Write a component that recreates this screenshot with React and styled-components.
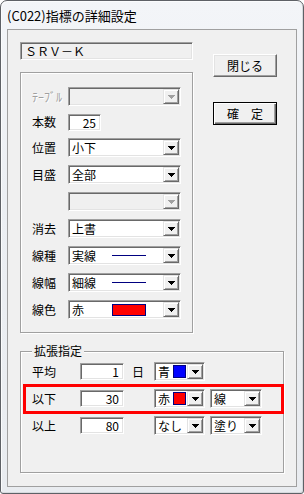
import styled, { createGlobalStyle, css } from "styled-components";

const GlobalStyle = createGlobalStyle`
  html, body {
    margin: 0;
    padding: 0;
    background: #ffffff;
  }
  body {
    font-family: "Noto Sans CJK JP", "Liberation Sans", sans-serif;
    font-size: 12px;
    line-height: 14px;
    color: #000;
  }
  * {
    box-sizing: border-box;
  }
`;

// 3D edges of the classic Windows controls
const sunken = css`
  border: 1px solid;
  border-color: #a0a0a0 #ffffff #ffffff #a0a0a0;
  box-shadow: inset 1px 1px 0 #696969, inset -1px -1px 0 #e3e3e3;
`;

const raised = css`
  border: 1px solid;
  border-color: #e3e3e3 #696969 #696969 #e3e3e3;
  box-shadow: inset 1px 1px 0 #ffffff, inset -1px -1px 0 #a0a0a0;
`;

const etched = css`
  border: 1px solid #a0a0a0;
  box-shadow: inset 1px 1px 0 #ffffff, 1px 1px 0 #ffffff;
`;

const mainRows = [
  { id: 1, label: "本数", kind: "edit", value: "25" },
  { id: 2, label: "位置", kind: "combo", value: "小下" },
  { id: 3, label: "目盛", kind: "combo", value: "全部" },
  { id: 4, label: "", kind: "combo", value: "", disabled: true },
  { id: 5, label: "消去", kind: "combo", value: "上書" },
  { id: 6, label: "線種", kind: "combo", value: "実線", sample: "line" },
  { id: 7, label: "線幅", kind: "combo", value: "細線", sample: "line" },
  { id: 8, label: "線色", kind: "combo", value: "赤", sample: "color" }
];

const extRows = [
  { id: 1, label: "平均", value: "1", unit: "日", color: "青", swatch: "#0000ff" },
  { id: 2, label: "以下", value: "30", color: "赤", swatch: "#ff0000", type: "線", highlight: true },
  { id: 3, label: "以上", value: "80", color: "なし", type: "塗り" }
];

const Arrow = ({ disabled }) => (
  <svg width="7" height="4" viewBox="0 0 7 4">
    <path
      d="M0 0h7v1H0zM1 1h5v1H1zM2 2h3v1H2zM3 3h1v1H3z"
      fill={disabled ? "#a0a0a0" : "#000000"}
    />
  </svg>
);

const Combo = ({ width, disabled, children }) => (
  <ComboBox $width={width} $disabled={disabled}>
    <ComboValue>{children}</ComboValue>
    <DropButton>
      <Arrow disabled={disabled} />
    </DropButton>
  </ComboBox>
);

const App = () => {
  return (
    <>
      <GlobalStyle />
      <Window>
        <TitleBar>(C022)指標の詳細設定</TitleBar>
        <Panel>
          <TopArea>
            <LeftCol>
              <NameField>ＳＲＶ－Ｋ</NameField>
              <MainGroup>
                <Row>
                  <Label $disabled>ﾃｰﾌﾞﾙ</Label>
                  <Combo width={113} disabled />
                </Row>
                {mainRows.map((row) => (
                  <Row key={row.id} $h={row.kind === "edit" ? 16 : 19}>
                    <Label>{row.label}</Label>
                    {row.kind === "edit" ? (
                      <EditBox $width={33}>{row.value}</EditBox>
                    ) : (
                      <Combo width={113} disabled={row.disabled}>
                        <ValueText>{row.value}</ValueText>
                        {row.sample === "line" && <LineSample />}
                        {row.sample === "color" && <Swatch $color="#ff0000" $w={34} />}
                      </Combo>
                    )}
                  </Row>
                ))}
              </MainGroup>
            </LeftCol>
            <RightCol>
              <PushButton>閉じる</PushButton>
              <PushButton $default>確　定</PushButton>
            </RightCol>
          </TopArea>

          <ExtGroup>
            <Caption>拡張指定</Caption>
            {extRows.map((row) => (
              <ExtRow key={row.id} $highlight={row.highlight}>
                <ExtLabel>{row.label}</ExtLabel>
                <EditBox $width={44}>{row.value}</EditBox>
                <Unit>{row.unit}</Unit>
                <Combo width={51}>
                  <SmallText>{row.color}</SmallText>
                  {row.swatch && <Swatch $color={row.swatch} $w={13} />}
                </Combo>
                {row.type && (
                  <TypeSlot>
                    <Combo width={52}>
                      <SmallText>{row.type}</SmallText>
                    </Combo>
                  </TypeSlot>
                )}
              </ExtRow>
            ))}
          </ExtGroup>
        </Panel>
      </Window>
    </>
  );
};

const Window = styled.div`
  width: 304px;
  height: 494px;
  display: flex;
  flex-direction: column;
  border: 1px solid #5e6166;
  border-radius: 7px 7px 3px 3px;
  background: linear-gradient(180deg, #f3f5f8 0%, #eceff3 40%, #e9ecf0 100%);
  box-shadow: inset 1px 1px 0 #fbfcfd, inset -1px -1px 0 #d6d9dd;
  overflow: hidden;
`;

const TitleBar = styled.div`
  height: 28px;
  flex-shrink: 0;
  display: flex;
  align-items: center;
  padding: 2px 0 0 6px;
  font-size: 13px;
  color: #000;
`;

const Panel = styled.div`
  flex: 1;
  margin: 0 6px 6px 6px;
  border: 1px solid #a0a0a0;
  background: #f0f0f0;
  padding: 12px 0 0 12px;
  display: flex;
  flex-direction: column;
`;

const TopArea = styled.div`
  display: flex;
`;

const LeftCol = styled.div`
  width: 173px;
  display: flex;
  flex-direction: column;
`;

const RightCol = styled.div`
  display: flex;
  flex-direction: column;
  gap: 25px;
  margin-left: 20px;
  padding-top: 12px;
`;

const NameField = styled.div`
  height: 18px;
  ${sunken};
  background: #f0f0f0;
  padding: 1px 0 0 4px;
  line-height: 14px;
`;

const MainGroup = styled.div`
  margin-top: 12px;
  height: 261px;
  ${etched};
  padding: 14px 0 0 11px;
  display: flex;
  flex-direction: column;
  gap: 8px;
`;

const Row = styled.div`
  display: flex;
  align-items: center;
  height: ${(p) => p.$h || 19}px;
`;

const Label = styled.span`
  width: 36px;
  flex-shrink: 0;
  color: ${(p) => (p.$disabled ? "#a0a0a0" : "#000")};
  text-shadow: ${(p) => (p.$disabled ? "1px 1px 0 #ffffff" : "none")};
`;

const ComboBox = styled.div`
  width: ${(p) => p.$width}px;
  height: 19px;
  flex-shrink: 0;
  display: flex;
  align-items: center;
  ${sunken};
  background: ${(p) => (p.$disabled ? "#f0f0f0" : "#ffffff")};
  padding: 1px 1px 1px 2px;
`;

const ComboValue = styled.div`
  flex: 1;
  display: flex;
  align-items: center;
  height: 15px;
  overflow: hidden;
`;

const DropButton = styled.div`
  width: 16px;
  height: 15px;
  flex-shrink: 0;
  display: flex;
  align-items: center;
  justify-content: center;
  background: #f0f0f0;
  ${raised};
`;

const ValueText = styled.span`
  width: 41px;
  flex-shrink: 0;
  padding-left: 1px;
`;

const SmallText = styled.span`
  padding-left: 1px;
  white-space: nowrap;
`;

const LineSample = styled.span`
  width: 34px;
  height: 1px;
  background: #000080;
`;

const Swatch = styled.span`
  width: ${(p) => p.$w}px;
  height: ${(p) => (p.$w > 20 ? 12 : 13)}px;
  margin-left: ${(p) => (p.$w > 20 ? 0 : 3)}px;
  background: ${(p) => p.$color};
  border: 1px solid #000080;
`;

const EditBox = styled.div`
  width: ${(p) => p.$width}px;
  height: 17px;
  flex-shrink: 0;
  ${sunken};
  background: #ffffff;
  text-align: right;
  padding: 1px 4px 0 0;
  line-height: 14px;
`;

const PushButton = styled.button`
  width: 64px;
  height: 23px;
  padding: 0;
  font-family: inherit;
  font-size: 12px;
  color: #000;
  background: #f0f0f0;
  border: 1px solid;
  border-color: #ffffff #696969 #696969 #ffffff;
  box-shadow: inset -1px -1px 0 #a0a0a0, inset 1px 1px 0 #e3e3e3;
  ${(p) =>
    p.$default &&
    css`
      border: 1px solid #000;
      box-shadow: inset 1px 1px 0 #ffffff, inset -1px -1px 0 #696969,
        inset -2px -2px 0 #a0a0a0;
    `}
`;

const ExtGroup = styled.div`
  position: relative;
  width: 264px;
  height: 122px;
  margin-top: 18px;
  ${etched};
  padding: 10px 0 0 2px;
  display: flex;
  flex-direction: column;
`;

const Caption = styled.span`
  position: absolute;
  top: -8px;
  left: 11px;
  padding: 0 2px;
  background: #f0f0f0;
  line-height: 14px;
`;

const ExtRow = styled.div`
  display: flex;
  align-items: center;
  width: 261px;
  border-left: 3px solid transparent;
  border-right: 3px solid transparent;
  padding-left: 6px;
  ${(p) =>
    p.$highlight &&
    css`
      border: 3px solid #ff0000;
      padding-top: 2px;
      padding-bottom: 3px;
      margin: 3px 0 2px;
    `}
`;

const ExtLabel = styled.span`
  width: 48px;
  flex-shrink: 0;
`;

const Unit = styled.span`
  width: 30px;
  flex-shrink: 0;
  padding-left: 8px;
`;

const TypeSlot = styled.div`
  margin-left: 5px;
`;

export default App;
